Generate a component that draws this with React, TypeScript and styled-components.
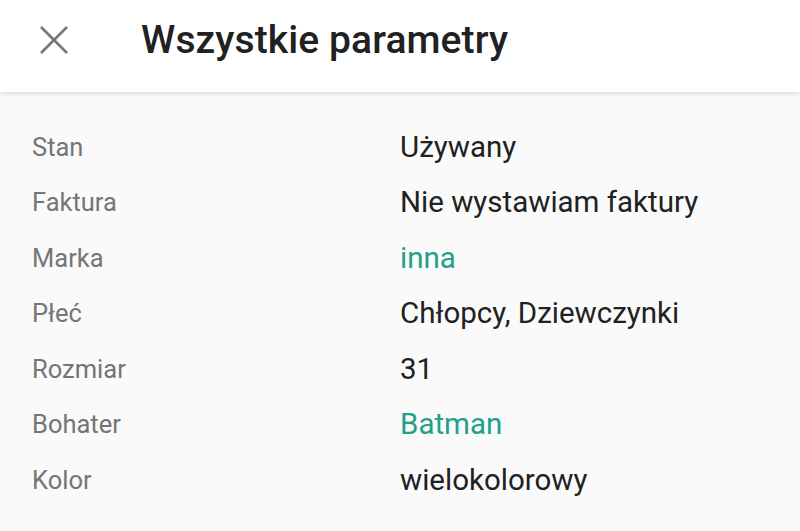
import React from "react";
import styled, { createGlobalStyle } from "styled-components";

const Global = createGlobalStyle`
  html, body { margin: 0; padding: 0; background: #fafafa; }
  body { font-family: Roboto, "Noto Sans", Arial, sans-serif; }
`;

const Page = styled.div`
  width: 800px;
  height: 531px;
  overflow: hidden;
  background: #fafafa;
`;

const Header = styled.header`
  box-sizing: border-box;
  height: 92px;
  padding-bottom: 12px;
  display: flex;
  align-items: center;
  background: #fff;
  box-shadow: 0 2px 4px rgba(0, 0, 0, 0.12);
  position: relative;
  z-index: 1;
`;

const CloseButton = styled.button`
  width: 54px;
  height: 54px;
  margin-left: 27px;
  padding: 0;
  border: 0;
  background: none;
  display: flex;
  align-items: center;
  justify-content: center;
  color: #767676;
`;

const Title = styled.h1`
  margin: 0 0 0 60px;
  font-size: 39px;
  font-weight: 500;
  color: #212121;
  letter-spacing: 0.1px;
`;

const List = styled.dl`
  margin: 0;
  padding: 27px 0 0 32px;
  display: grid;
  grid-template-columns: 368px 1fr;
  grid-auto-rows: 55.5px;
  align-items: center;
`;

const Label = styled.dt`
  font-size: 25.5px;
  color: #757575;
`;

const Value = styled.dd<{ $link?: boolean }>`
  margin: 0;
  font-size: 29.5px;
  color: ${(p) => (p.$link ? "#22a08b" : "#212121")};
`;

const rows: { label: string; value: string; link?: boolean }[] = [
  { label: "Stan", value: "Używany" },
  { label: "Faktura", value: "Nie wystawiam faktury" },
  { label: "Marka", value: "inna", link: true },
  { label: "Płeć", value: "Chłopcy, Dziewczynki" },
  { label: "Rozmiar", value: "31" },
  { label: "Bohater", value: "Batman", link: true },
  { label: "Kolor", value: "wielokolorowy" },
];

export default function App() {
  return (
    <Page>
      <Global />
      <Header>
        <CloseButton aria-label="Zamknij">
          <svg width="30" height="30" viewBox="0 0 30 30" fill="none" stroke="currentColor" strokeWidth="2.6">
            <path d="M2 2 L28 28 M28 2 L2 28" />
          </svg>
        </CloseButton>
        <Title>Wszystkie parametry</Title>
      </Header>
      <List>
        {rows.map((r) => (
          <React.Fragment key={r.label}>
            <Label>{r.label}</Label>
            <Value $link={r.link}>{r.value}</Value>
          </React.Fragment>
        ))}
      </List>
    </Page>
  );
}
